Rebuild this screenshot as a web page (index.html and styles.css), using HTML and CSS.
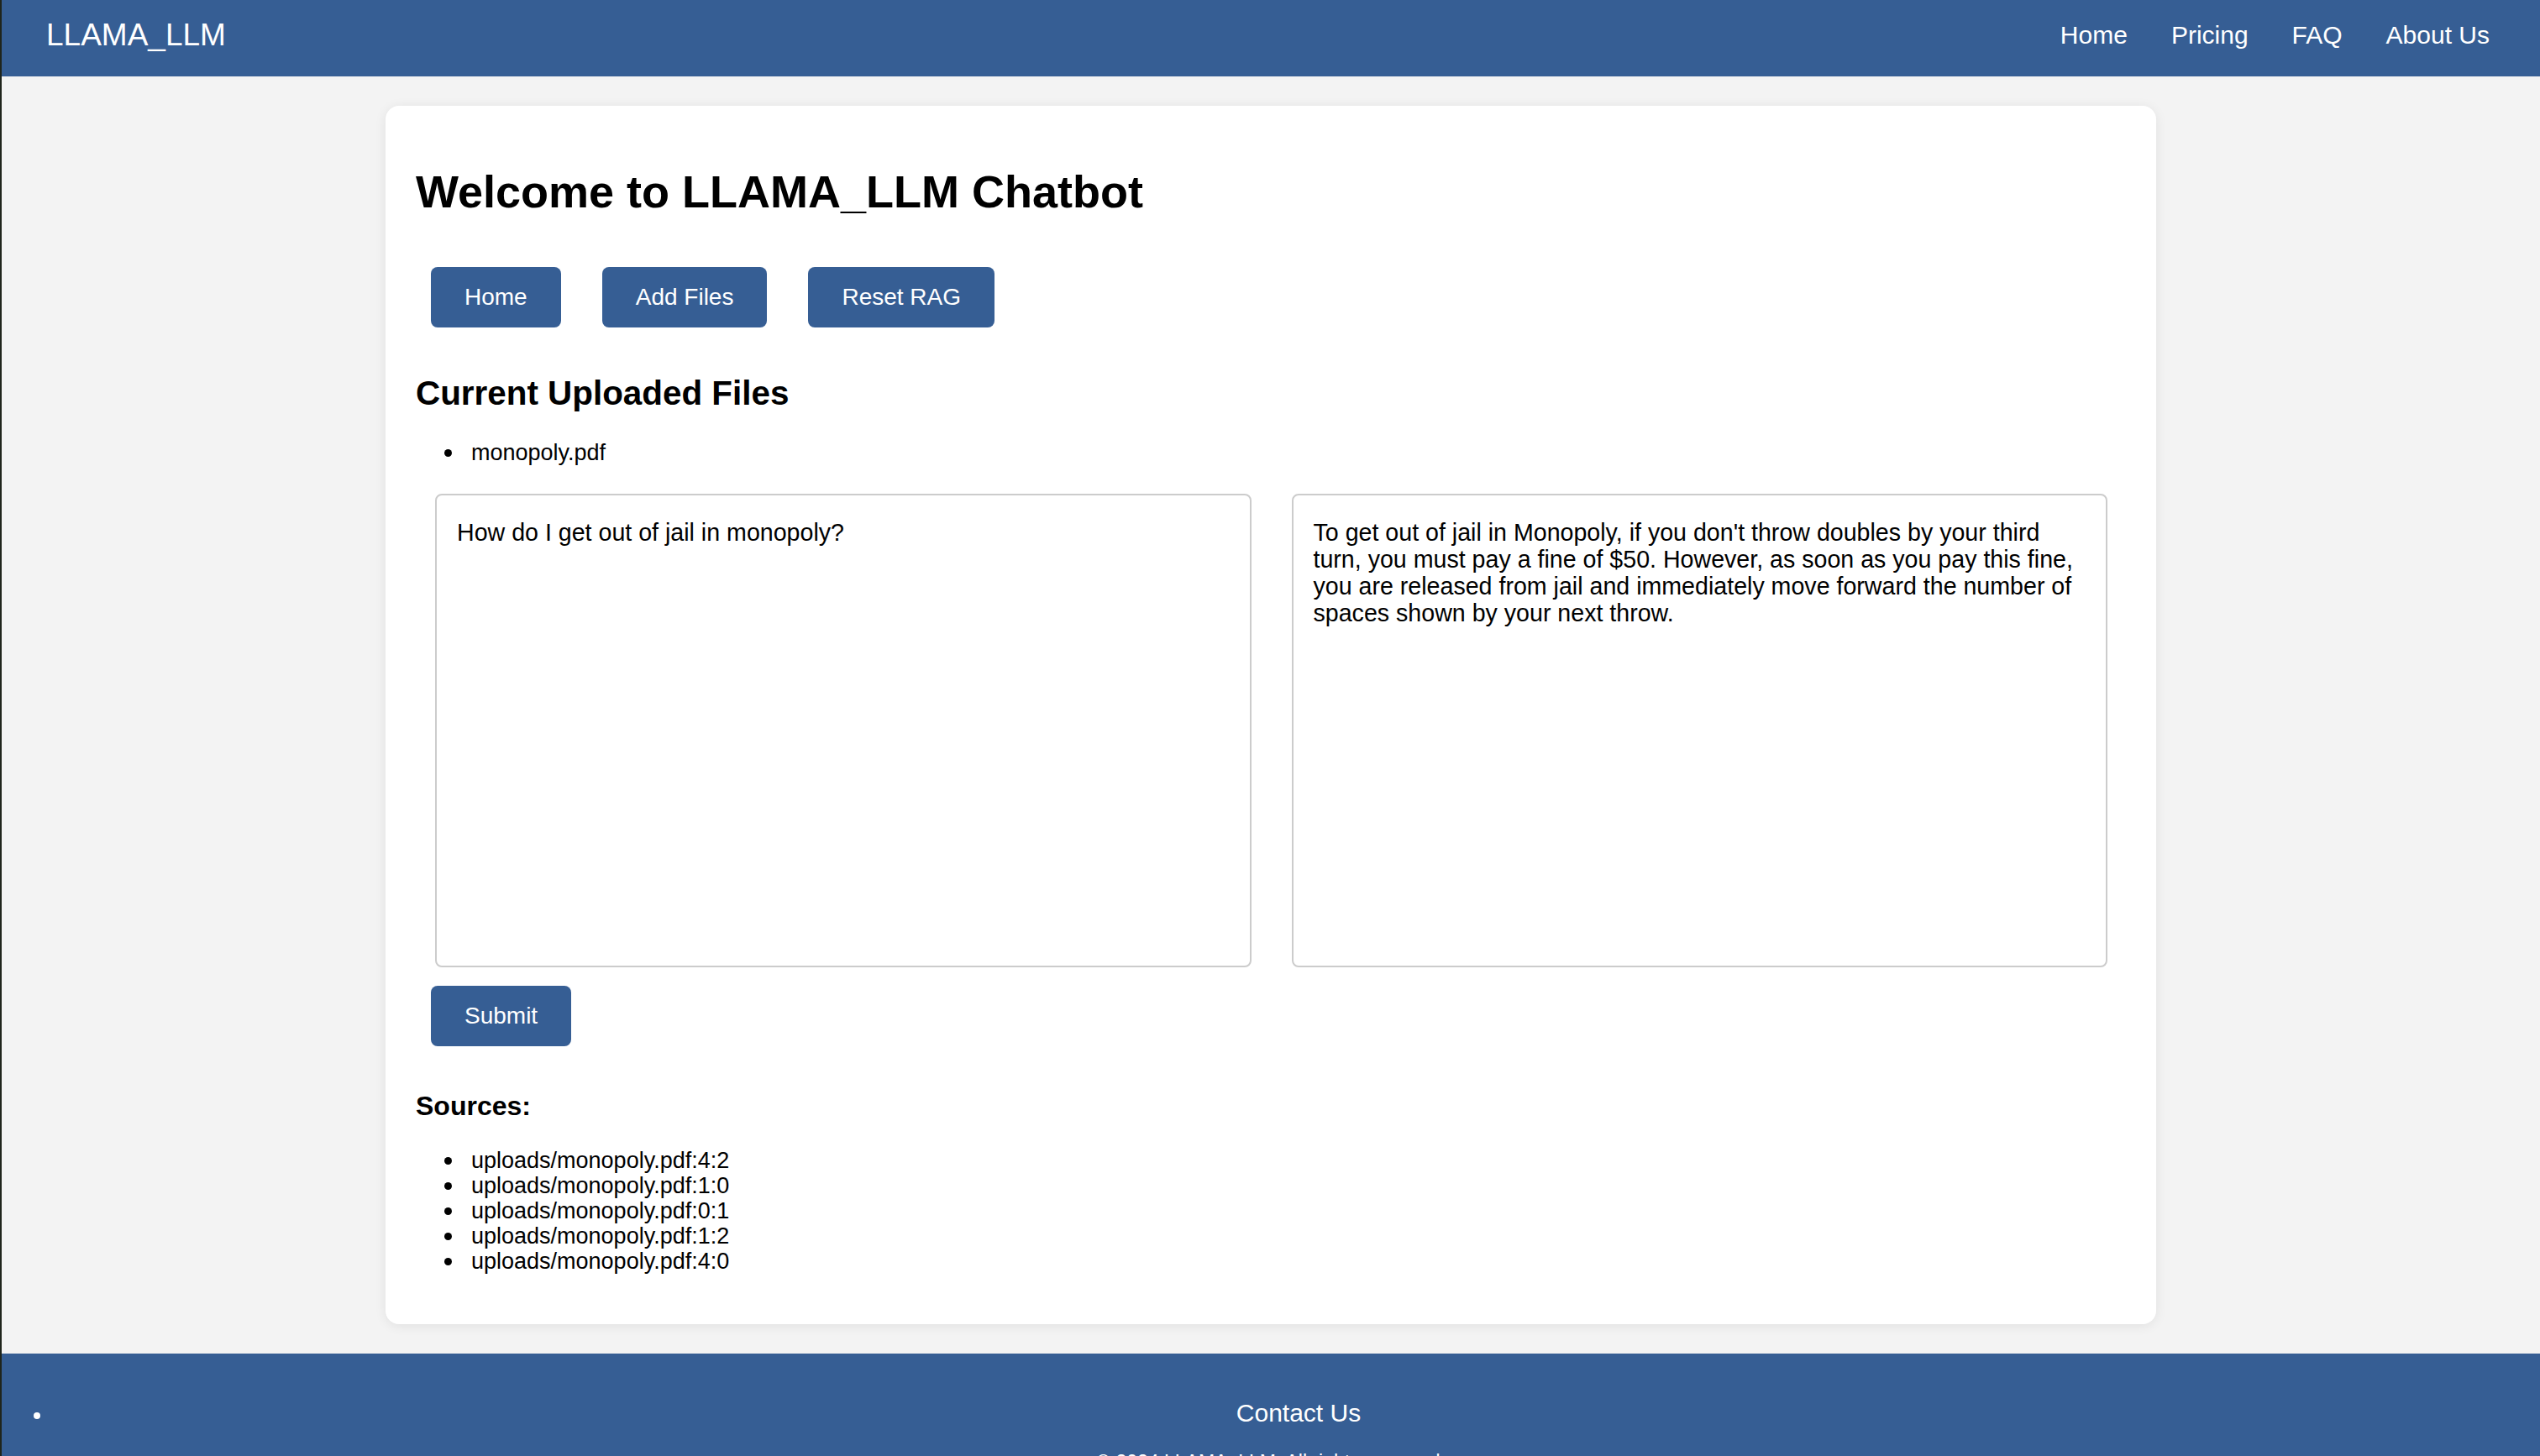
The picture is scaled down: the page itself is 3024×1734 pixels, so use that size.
FILE: index.html
```html
<!DOCTYPE html>
<html lang="en">
<head>
<meta charset="utf-8">
<title>LLAMA_LLM Chatbot</title>
<link rel="stylesheet" href="styles.css">
</head>
<body>
<header class="site-header">
  <div class="logo">LLAMA_LLM</div>
  <nav class="main-nav">
    <a href="#">Home</a>
    <a href="#">Pricing</a>
    <a href="#">FAQ</a>
    <a href="#">About Us</a>
  </nav>
</header>

<main class="card">
  <h1 class="title">Welcome to LLAMA_LLM Chatbot</h1>
  <div class="actions">
    <button class="btn">Home</button>
    <button class="btn">Add Files</button>
    <button class="btn">Reset RAG</button>
  </div>

  <h2 class="section-title">Current Uploaded Files</h2>
  <ul class="bullets files">
    <li>monopoly.pdf</li>
  </ul>

  <form class="qa">
    <div class="qa-grid">
      <textarea class="box" readonly>How do I get out of jail in monopoly?</textarea>
      <textarea class="box" readonly>To get out of jail in Monopoly, if you don't throw doubles by your third turn, you must pay a fine of $50. However, as soon as you pay this fine, you are released from jail and immediately move forward the number of spaces shown by your next throw.</textarea>
    </div>
    <button type="button" class="btn submit">Submit</button>
  </form>

  <h3 class="sources-title">Sources:</h3>
  <ul class="bullets sources">
    <li>uploads/monopoly.pdf:4:2</li>
    <li>uploads/monopoly.pdf:1:0</li>
    <li>uploads/monopoly.pdf:0:1</li>
    <li>uploads/monopoly.pdf:1:2</li>
    <li>uploads/monopoly.pdf:4:0</li>
  </ul>
</main>

<footer class="site-footer">
  <ul class="footer-links">
    <li><a href="#">Contact Us</a></li>
  </ul>
  <p class="copyright">© 2024 LLAMA_LLM. All rights reserved.</p>
</footer>
</body>
</html>
```

FILE: styles.css
```css
html {
  background: #1f251c;
}

body {
  margin: 0 0 0 2px;
  min-height: 100vh;
  background: #f3f3f3;
  color: #000;
  font-family: "Liberation Sans", Arial, Helvetica, sans-serif;
}

/* Header */
.site-header {
  height: 91px;
  box-sizing: border-box;
  padding: 0 60px 7px 53px;
  background: #365e94;
  color: #fff;
  display: flex;
  align-items: center;
  justify-content: space-between;
}

.logo {
  font-size: 37px;
  line-height: 42px;
}

.main-nav {
  display: flex;
  gap: 52px;
}

.main-nav a {
  color: #fff;
  text-decoration: none;
  font-size: 30px;
  line-height: 34px;
}

/* Card */
.card {
  display: block;
  width: 2108px;
  box-sizing: border-box;
  margin: 35px auto;
  padding: 71px 36px 60px;
  background: #fff;
  border-radius: 16px;
  box-shadow: 0 2px 14px rgba(0, 0, 0, 0.08);
}

.title {
  margin: 0;
  font-size: 54px;
  line-height: 62px;
  font-weight: bold;
}

.actions {
  display: flex;
  gap: 49px;
  margin-top: 59px;
  padding-left: 18px;
}

.btn {
  border: none;
  border-radius: 8px;
  background: #365e94;
  color: #fff;
  font-family: inherit;
  font-size: 28px;
  line-height: 32px;
  padding: 20px 40px;
  cursor: pointer;
}

.section-title {
  margin: 55px 0 0;
  font-size: 40.4px;
  line-height: 46px;
  font-weight: bold;
}

.bullets {
  list-style: none;
  margin: 0;
  padding: 0 0 0 34px;
  font-size: 27px;
  line-height: 30px;
}

.bullets li::before {
  content: "";
  display: inline-block;
  width: 9px;
  height: 9px;
  border-radius: 50%;
  background: #000;
  margin-right: 23px;
  vertical-align: 4px;
}

.files {
  margin-top: 33px;
}

.qa {
  margin: 34px 0 0;
}

.qa-grid {
  display: grid;
  grid-template-columns: 1fr 1fr;
  gap: 48px;
  padding: 0 22px 0 23px;
}

.box {
  display: block;
  height: 564px;
  box-sizing: border-box;
  width: 100%;
  margin: 0;
  padding: 28px 24px;
  border: 2px solid #cccccc;
  border-radius: 8px;
  background: #fff;
  color: #000;
  font-family: inherit;
  font-size: 28.6px;
  line-height: 32px;
  resize: none;
  overflow: hidden;
  outline: none;
}

.submit {
  display: block;
  margin: 22px 0 0 18px;
}

.sources-title {
  margin: 53px 0 0;
  font-size: 32px;
  line-height: 37px;
  font-weight: bold;
}

.sources {
  margin-top: 31px;
}

/* Footer */
.site-footer {
  background: #365e94;
  color: #fff;
  padding: 54px 0 40px;
}

.footer-links {
  list-style: none;
  margin: 0;
  padding: 0;
}

.footer-links li {
  display: flex;
  align-items: center;
}

.footer-links li::before {
  content: "";
  flex: none;
  width: 8px;
  height: 8px;
  border-radius: 50%;
  background: #fff;
  margin: 6px 0 0 38px;
}

.footer-links a {
  flex: 1;
  text-align: center;
  padding-left: 20px;
  color: #fff;
  text-decoration: none;
  font-size: 30px;
  line-height: 34px;
}

.copyright {
  margin: 28px 0 0;
  text-align: center;
  font-size: 23px;
  line-height: 26px;
}
```
